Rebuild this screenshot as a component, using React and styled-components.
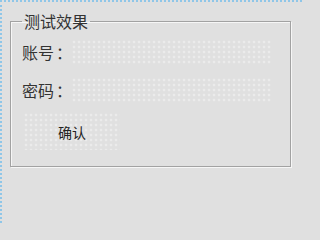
import React from "react";
import styled, { createGlobalStyle } from "styled-components";

const GlobalStyle = createGlobalStyle`
  html, body {
    margin: 0;
    padding: 0;
    background: #e0e0e0;
  }
  body {
    font-family: "Noto Sans CJK SC", "Noto Sans", sans-serif;
  }
`;

// designer grid: faint light dots every 5px
const dots = `
  background-color: #e0e0e0;
  background-image: radial-gradient(circle at 2px 2px, #ebebeb 1.2px, transparent 1.7px);
  background-size: 5px 5px;
`;

const Form = styled.div`
  width: 302px;
  height: 223px;
  box-sizing: border-box;
  border-left: 2px dotted #8fc6e8;
  border-top: 2px dotted #8fc6e8;
  padding: 9px 0 0 8px;
  background: #e0e0e0;
`;

const GroupBox = styled.fieldset`
  width: 281px;
  height: 156px;
  box-sizing: border-box;
  margin: 0;
  padding: 9px 0 0 11px;
  border: 1px solid #a2a2a2;
  box-shadow: 1px 1px 0 #f6f6f6, inset 1px 1px 0 #f6f6f6;
  display: flex;
  flex-direction: column;
`;

const Title = styled.legend`
  margin-left: 0;
  padding: 0 2px;
  font-size: 16px;
  line-height: 20px;
  color: #333;
`;

const Row = styled.div`
  display: flex;
  align-items: center;
  margin-bottom: ${(p) => p.$gap}px;
`;

const Label = styled.span`
  width: 50px;
  flex-shrink: 0;
  white-space: nowrap;
  font-size: 16px;
  line-height: 25px;
  color: #333;
`;

const Colon = styled.span`
  margin-left: 2px;
`;

const Field = styled.div`
  width: 200px;
  height: 25px;
  flex-shrink: 0;
  ${dots}
`;

const Button = styled.div`
  width: 96px;
  height: 37px;
  flex-shrink: 0;
  margin-left: 2px;
  display: flex;
  align-items: center;
  justify-content: center;
  font-size: 14px;
  color: #222;
  ${dots}
`;

export default function App() {
  return (
    <>
      <GlobalStyle />
      <Form>
        <GroupBox>
          <Title>测试效果</Title>
          <Row $gap={13}>
            <Label>
              账号<Colon>：</Colon>
            </Label>
            <Field />
          </Row>
          <Row $gap={10}>
            <Label>
              密码<Colon>：</Colon>
            </Label>
            <Field />
          </Row>
          <Button>确认</Button>
        </GroupBox>
      </Form>
    </>
  );
}
